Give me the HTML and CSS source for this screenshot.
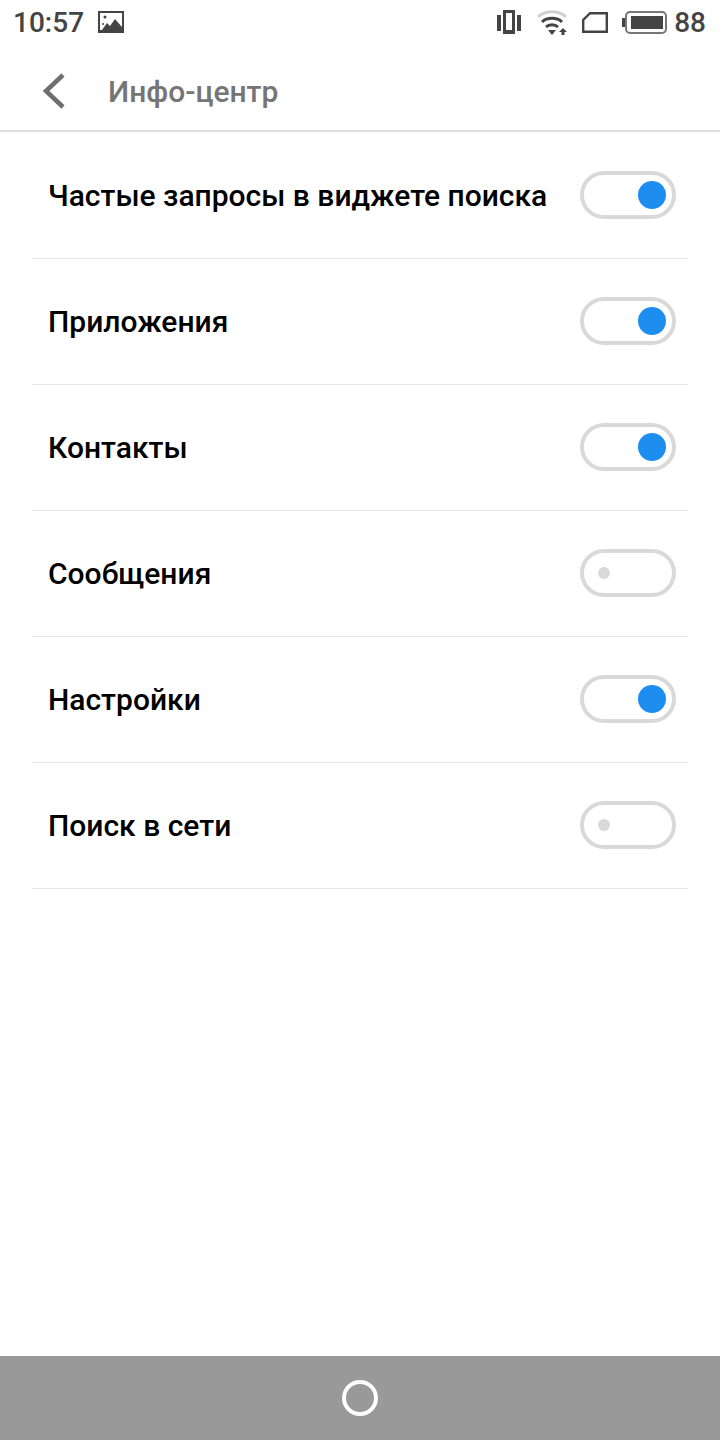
FILE: index.html
```html
<!DOCTYPE html>
<html lang="ru">
<head>
    <meta charset="UTF-8">
    <meta name="viewport" content="width=device-width, initial-scale=1.0">
    <title>Инфо-центр</title>
    <link rel="stylesheet" href="styles.css">
</head>
<body>
    <div class="screen">
        <div class="status-bar">
            <div class="status-left">
                <span class="status-time">10:57</span>
                <svg class="icon-picture" width="26" height="22" viewBox="0 0 26 22">
                    <path fill="#444" fill-rule="evenodd" d="M0 0H26V22H0ZM2 2V19H4L9 12L12 15L17 8L24 16V2Z"/>
                    <circle cx="7" cy="6" r="1.500" fill="#444"/>
                    <circle cx="5" cy="13" r="1" fill="#444"/>
                </svg>
            </div>
            <div class="status-right">
                <svg class="icon-vibrate" width="24" height="24" viewBox="0 0 24 24">
                    <rect x="0" y="5" width="4" height="16" fill="#444"/>
                    <rect x="20" y="5" width="4" height="16" fill="#444"/>
                    <path fill="#444" fill-rule="evenodd" d="M6 0H18V24H6ZM9 3V20H15V3Z"/>
                </svg>
                <svg class="icon-wifi" width="30" height="25" viewBox="0 0 30 25">
                    <path d="M1 7C8 0 22 0 29 7" fill="none" stroke="#cfcfcf" stroke-width="3"/>
                    <path d="M5 12C10 7 20 7 25 12" fill="none" stroke="#444" stroke-width="3"/>
                    <path d="M9 17C12 14 18 14 21 17" fill="none" stroke="#444" stroke-width="3"/>
                    <path d="M11 20H19L15 25Z" fill="#444"/>
                    <path d="M26 18L30 22H27.500V25H24.500V22H22Z" fill="#444"/>
                </svg>
                <svg class="icon-sim" width="26" height="21" viewBox="0 0 26 21">
                    <path d="M8 1.200H24.800V19.800H1.200V8Z" fill="none" stroke="#444" stroke-width="2.400"/>
                </svg>
                <svg class="icon-battery" width="45" height="23" viewBox="0 0 45 23">
                    <rect x="0" y="7" width="3" height="9" fill="#444"/>
                    <rect x="4" y="1" width="40" height="21" rx="4" fill="none" stroke="#777" stroke-width="2"/>
                    <rect x="9" y="5" width="32" height="13" fill="#444"/>
                </svg>
                <span class="status-battery">88</span>
            </div>
        </div>

        <div class="header">
            <svg class="back-icon" width="24" height="36" viewBox="0 0 24 36">
                <path d="M21 2L4 18L21 34" fill="none" stroke="#6e6e6e" stroke-width="4.500"/>
            </svg>
            <h1 class="header-title">Инфо-центр</h1>
        </div>

        <div class="settings-list">
            <div class="settings-row">
                <span class="row-label">Частые запросы в виджете поиска</span>
                <div class="toggle on"><div class="toggle-dot"></div></div>
            </div>
            <div class="settings-row">
                <span class="row-label">Приложения</span>
                <div class="toggle on"><div class="toggle-dot"></div></div>
            </div>
            <div class="settings-row">
                <span class="row-label">Контакты</span>
                <div class="toggle on"><div class="toggle-dot"></div></div>
            </div>
            <div class="settings-row">
                <span class="row-label">Сообщения</span>
                <div class="toggle"><div class="toggle-dot"></div></div>
            </div>
            <div class="settings-row">
                <span class="row-label">Настройки</span>
                <div class="toggle on"><div class="toggle-dot"></div></div>
            </div>
            <div class="settings-row">
                <span class="row-label">Поиск в сети</span>
                <div class="toggle"><div class="toggle-dot"></div></div>
            </div>
        </div>

        <div class="nav-bar">
            <div class="home-button"></div>
        </div>
    </div>
</body>
</html>
```

FILE: styles.css
```css
* {
    box-sizing: border-box;
    margin: 0;
    padding: 0;
}

body {
    font-family: Roboto, "Noto Sans", sans-serif;
    background-color: #ffffff;
}

.screen {
    display: flex;
    flex-direction: column;
    height: 1440px;
    width: 720px;
}

.status-bar {
    display: flex;
    justify-content: space-between;
    align-items: center;
    height: 52px;
    padding: 0 14px 8px 13px;
    color: #444444;
    font-size: 28px;
    font-weight: 500;
}

.status-left {
    display: flex;
    align-items: center;
    gap: 14px;
}

.status-right {
    display: flex;
    align-items: center;
}

.icon-vibrate {
    margin-right: 16px;
}

.icon-wifi {
    margin-right: 15px;
}

.icon-sim {
    margin-right: 14px;
}

.icon-battery {
    margin-right: 7px;
}

.header {
    display: flex;
    align-items: center;
    height: 80px;
    padding-left: 42px;
    border-bottom: 2px solid #dddddd;
}

.back-icon {
    margin-right: 42px;
}

.header-title {
    font-size: 30px;
    font-weight: 500;
    color: #757575;
}

.settings-list {
    flex-grow: 1;
    padding-top: 1px;
}

.settings-row {
    display: flex;
    justify-content: space-between;
    align-items: center;
    height: 126px;
    margin: 0 32px;
    padding: 0 12px 0 16px;
    border-bottom: 1px solid #e6e6e6;
}

.row-label {
    font-size: 30px;
    font-weight: 500;
    color: #000000;
}

.toggle {
    display: flex;
    align-items: center;
    width: 96px;
    height: 48px;
    margin-bottom: 2px;
    padding-left: 14px;
    border: 4px solid #d9d9d9;
    border-radius: 24px;
}

.toggle-dot {
    width: 12px;
    height: 12px;
    border-radius: 50%;
    background-color: #d9d9d9;
}

.toggle.on {
    justify-content: flex-end;
    padding-left: 0;
    padding-right: 6px;
}

.toggle.on .toggle-dot {
    width: 28px;
    height: 28px;
    background-color: #1e8df0;
}

.nav-bar {
    display: flex;
    justify-content: center;
    align-items: center;
    height: 84px;
    background-color: #999999;
}

.home-button {
    width: 36px;
    height: 36px;
    border: 4px solid #ffffff;
    border-radius: 50%;
}
```
